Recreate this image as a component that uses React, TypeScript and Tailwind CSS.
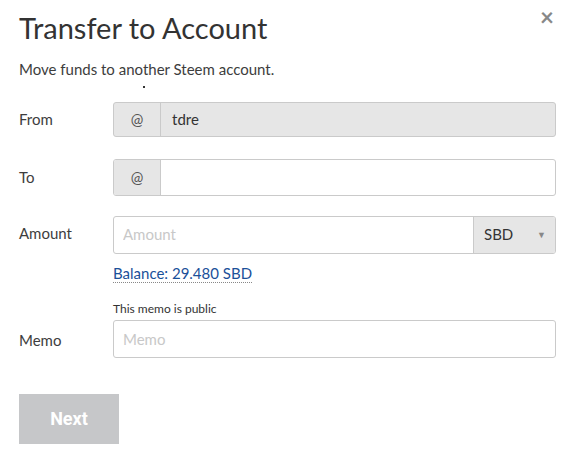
import React, { useState } from "react";

const font = { fontFamily: "Lato, 'Open Sans', sans-serif" };

const Label: React.FC<{ text: string }> = ({ text }) => (
  <div className="w-[94px] shrink-0 text-[15px] text-[#3d3d3d]">{text}</div>
);

export default function App() {
  const [to, setTo] = useState("");
  const [amount, setAmount] = useState("");
  const [memo, setMemo] = useState("");

  return (
    <div className="w-[582px] h-[456px] bg-white relative" style={font}>
      <button className="absolute right-[28px] top-[5px] text-[24px] leading-none text-[#888] font-bold">
        ×
      </button>

      <div className="px-[19px] pt-[10px]">
        <h1 className="text-[29px] leading-[36px] text-[#333]">Transfer to Account</h1>
        <p className="mt-[12px] text-[15px] text-[#3d3d3d]">Move funds to another Steem account.</p>
        <div className="ml-[124px] mt-[5px] h-[2px] w-[2px] bg-[#333]" />

        {/* From */}
        <div className="mt-[14px] flex items-center">
          <Label text="From" />
          <div className="flex h-[35px] flex-1 rounded-[3px] border border-[#cacaca] bg-[#e6e6e6] mr-[7px]">
            <div className="flex w-[47px] items-center justify-center border-r border-[#cacaca] text-[15px] text-[#555]">
              @
            </div>
            <div className="flex items-center pl-[11px] text-[15px] text-[#333]">tdre</div>
          </div>
        </div>

        {/* To */}
        <div className="mt-[22px] flex items-center">
          <Label text="To" />
          <div className="flex h-[37px] flex-1 rounded-[3px] border border-[#cacaca] bg-white mr-[7px] overflow-hidden">
            <div className="flex w-[47px] items-center justify-center border-r border-[#cacaca] bg-[#e6e6e6] text-[15px] text-[#555]">
              @
            </div>
            <input
              value={to}
              onChange={(e) => setTo(e.target.value)}
              className="flex-1 px-[10px] text-[15px] outline-none"
            />
          </div>
        </div>

        {/* Amount */}
        <div className="mt-[20px] flex items-start">
          <div className="pt-[6px]">
            <Label text="Amount" />
          </div>
          <div className="flex-1 mr-[7px]">
            <div className="flex h-[38px] rounded-[3px] border border-[#cacaca] overflow-hidden">
              <input
                value={amount}
                onChange={(e) => setAmount(e.target.value)}
                placeholder="Amount"
                className="flex-1 px-[9px] text-[15px] outline-none placeholder:text-[#c8c8c8]"
              />
              <div className="flex w-[82px] items-center justify-between border-l border-[#cacaca] bg-[#e6e6e6] pl-[10px] pr-[9px] text-[15px] text-[#333]">
                <span>SBD</span>
                <span className="text-[9px] text-[#888]">▼</span>
              </div>
            </div>
            <div className="mt-[7px]">
              <span className="border-b border-dotted border-[#888] text-[15px] text-[#1a5099] leading-[20px]">
                Balance: 29.480 SBD
              </span>
            </div>
          </div>
        </div>

        {/* Memo */}
        <div className="mt-[16px] flex items-end">
          <div className="pb-[6px]">
            <Label text="Memo" />
          </div>
          <div className="flex-1 mr-[7px]">
            <div className="text-[12px] text-[#333] leading-[16px] mb-[3px]">This memo is public</div>
            <input
              value={memo}
              onChange={(e) => setMemo(e.target.value)}
              placeholder="Memo"
              className="h-[38px] w-full rounded-[3px] border border-[#cacaca] px-[9px] text-[15px] outline-none placeholder:text-[#c8c8c8]"
            />
          </div>
        </div>

        <button
          disabled
          className="mt-[36px] h-[50px] w-[100px] bg-[#c6c7c9] text-[18px] font-bold text-white"
          style={{ fontFamily: "Roboto, sans-serif" }}
        >
          Next
        </button>
      </div>
    </div>
  );
}
